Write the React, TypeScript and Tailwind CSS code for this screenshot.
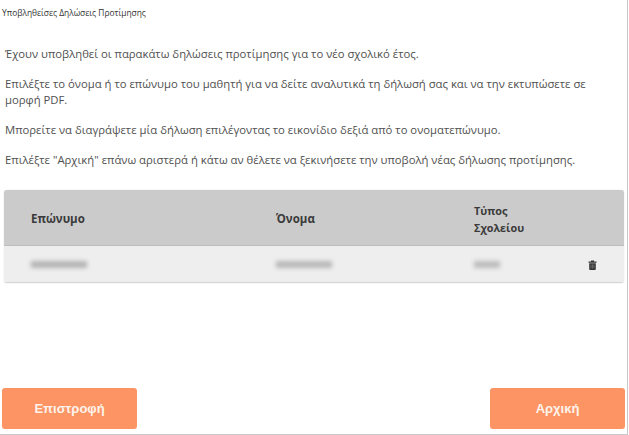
export default function App() {
  const p = "text-[11.3px] leading-[16px] text-[#505050]";
  return (
    <div className="w-[629px] h-[435px] bg-white overflow-hidden [font-family:'Open_Sans',sans-serif] flex">
      <div className="w-[628px] h-[435px] border-r border-b border-[#c8c8c8] flex flex-col shrink-0">
        <div className="pl-[2px] pt-[8px] text-[8.4px] leading-[10px] text-[#333]">Υποβληθείσες Δηλώσεις Προτίμησης</div>
        <div className="px-[5px] pt-[28px] flex flex-col gap-[14px]">
          <p className={p}>Έχουν υποβληθεί οι παρακάτω δηλώσεις προτίμησης για το νέο σχολικό έτος.</p>
          <p className={p}>Επιλέξτε το όνομα ή το επώνυμο του μαθητή για να δείτε αναλυτικά τη δήλωσή σας και να την εκτυπώσετε σε<br />μορφή PDF.</p>
          <p className={p}>Μπορείτε να διαγράψετε μία δήλωση επιλέγοντας το εικονίδιο δεξιά από το ονοματεπώνυμο.</p>
          <p className={p}>Επιλέξτε "Αρχική" επάνω αριστερά ή κάτω αν θέλετε να ξεκινήσετε την υποβολή νέας δήλωσης προτίμησης.</p>
        </div>
        <div className="ml-[4px] mr-[3px] mt-[22px] rounded-[3px] overflow-hidden border-b border-[#d4d4d4] shadow-[0_0_1px_#bbb]">
          <div className="h-[56px] pt-[2px] bg-[#cbcbcb] border-b border-[#bdbdbd] grid grid-cols-[245px_198px_1fr] items-center text-[11.5px] font-bold text-[#3a3a3a] pl-[27px]">
            <div>Επώνυμο</div>
            <div>Όνομα</div>
            <div className="text-[10.8px] leading-[17px]">Τύπος<br />Σχολείου</div>
          </div>
          <div className="h-[36px] pt-[1px] bg-[#eeeeee] grid grid-cols-[245px_198px_1fr] items-center pl-[27px]">
            <div className="w-[56px] h-[7px] bg-[#b4b4b4] blur-[2px]"></div>
            <div className="w-[56px] h-[7px] bg-[#b8b8b8] blur-[2px]"></div>
            <div className="flex items-center justify-between pr-[27px]">
              <div className="w-[26px] h-[7px] bg-[#bcbcbc] blur-[2px]"></div>
              <svg width="9" height="10" viewBox="0 0 9 10">
                <path d="M3 0.5h3v1h2.5v1.2H0.5V1.5H3z" fill="#333" />
                <path d="M1.2 3.2h6.6V9a1 1 0 0 1-1 1H2.2a1 1 0 0 1-1-1z" fill="#333" />
                <path d="M3 4.5v4M4.5 4.5v4M6 4.5v4" stroke="#999" strokeWidth="0.5" />
              </svg>
            </div>
          </div>
        </div>
        <div className="mt-auto flex justify-between pl-[2px] pr-[2px] pb-[5px]">
          <button className="w-[135px] h-[41px] rounded-[3px] bg-[#fc9463] text-[#fdf3ec] text-[13px] font-bold [font-family:'Liberation_Sans',sans-serif]">Επιστροφή</button>
          <button className="w-[135px] h-[41px] rounded-[3px] bg-[#fc9463] text-[#fdf3ec] text-[13px] font-bold [font-family:'Liberation_Sans',sans-serif]">Αρχική</button>
        </div>
      </div>
    </div>
  );
}
